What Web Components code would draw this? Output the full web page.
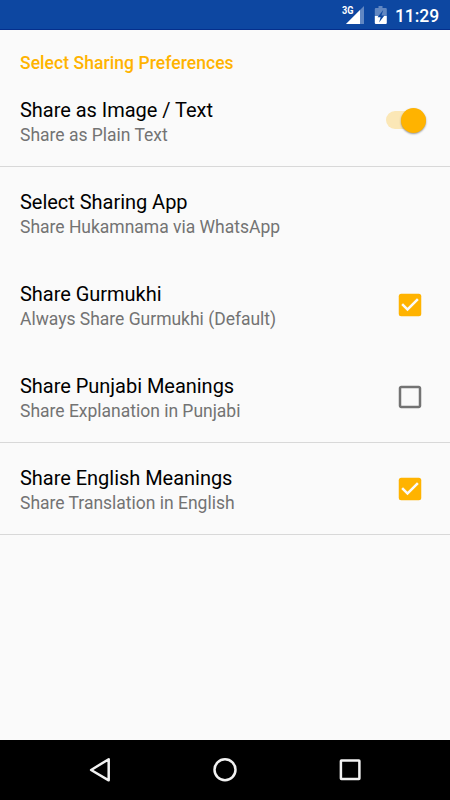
<!DOCTYPE html>
<html lang="en">
<head>
<meta charset="utf-8">
<title>Sharing Preferences</title>
<style>
body{margin:0;background:#fafafa;font-family:Roboto,"Noto Sans",sans-serif}
</style>
</head>
<body>
<settings-screen></settings-screen>
<script>
const define = (name, html) => customElements.define(name, class extends HTMLElement {
  constructor() {
    super();
    const t = document.createElement('template');
    t.innerHTML = html;
    this.attachShadow({mode: 'open'}).append(t.content.cloneNode(true));
  }
});

define('status-bar', `<style>
:host{display:flex;height:30px;box-sizing:border-box;background:#0d47a1;border-bottom:1px solid #052f8c;color:#fff;justify-content:flex-end;padding-right:11px;flex:none}
svg{display:block;width:54px;height:30px;flex:none}
.g{font:700 11px/11px Roboto,sans-serif;fill:#fff}
time{font-size:17.5px;font-weight:500;letter-spacing:-.08px;line-height:32px;width:45px;text-align:right;margin-left:2px;white-space:nowrap}
</style>
<svg viewBox="338 0 54 30">
<path d="M364 6v18h-18z" fill="#fff" opacity=".35"/><path d="M360 10v14h-14z" fill="#fff"/>
<text class="g" x="342" y="14" textLength="11.5" lengthAdjust="spacingAndGlyphs">3G</text>
<path d="M378.500 6h4v2h3.200q1.100 0 1.100 1.100V16h-12V9.100q0-1.100 1.100-1.100h2.600z" fill="#fff" opacity=".35"/>
<path d="M374.800 16h12v6.900q0 1.100-1.100 1.100h-9.800q-1.100 0-1.100-1.100z" fill="#fff"/>
<path d="M383.300 10l-5.800 7.200h3.100l-1.500 5.300 5.300-7h-3z" fill="#0d47a1"/>
</svg><time><slot></slot></time>`);

define('section-header', `<style>
:host{display:block;height:45px;box-sizing:border-box;padding:23px 20px 0;color:#ffb300;font-size:17.5px;font-weight:500;line-height:21px;letter-spacing:.06px}
</style><slot></slot>`);

define('preference-row', `<style>
:host{display:flex;align-items:center;height:92px;box-sizing:border-box;padding:0 20px;border-bottom:1px solid transparent}
:host([divided]){border-bottom-color:#d8d8d8}
.text{flex:1;display:flex;flex-direction:column;padding-top:4px}
.title{font-size:20px;line-height:25px;color:#000;letter-spacing:-.03px}
.summary{font-size:17.5px;line-height:25px;color:#737373;letter-spacing:-.01px}
</style>
<div class="text"><span class="title"><slot name="title"></slot></span><span class="summary"><slot></slot></span></div>
<slot name="control"></slot>`);

define('check-box', `<style>
:host{display:block;width:30px;height:30px;margin-right:5px}
svg{display:block}.on{display:none}
:host([checked]) .on{display:inline}:host([checked]) .off{display:none}
</style>
<svg width="30" height="30" viewBox="0 0 24 24">
<path class="off" fill="#737373" d="M19 5v14H5V5h14m0-2H5c-1.100 0-2 .9-2 2v14c0 1.100.9 2 2 2h14c1.100 0 2-.9 2-2V5c0-1.100-.9-2-2-2z"/>
<g class="on"><rect x="3" y="3" width="18" height="18" rx="2" fill="#ffb300"/>
<path fill="#fafafa" d="M10 17l-5-5 1.410-1.410L10 14.170l7.590-7.590L19 8z"/></g>
</svg>`);

define('toggle-switch', `<style>
:host{display:flex;align-items:center;justify-content:flex-end;width:40px;height:18px;border-radius:9px;background:#fbe7b6;margin:-1px 4px 0 0}
i{display:block;width:25px;height:25px;border-radius:50%;background:#ffb300;box-shadow:0 1px 2px rgba(0,0,0,.4);flex:none}
</style><i></i>`);

define('navigation-bar', `<style>
:host{display:flex;height:60px;background:#000;justify-content:center;flex:none}
svg{display:block;width:125px;height:60px;fill:none;stroke:#f2f2f2;stroke-width:2.5;stroke-linejoin:round}
</style>
<svg viewBox="0 0 125 60"><path d="M53.100 30L70.700 19.200v21.100z"/></svg>
<svg viewBox="0 0 125 60"><circle cx="62" cy="29.800" r="10.500"/></svg>
<svg viewBox="0 0 125 60"><rect x="52.900" y="20.500" width="18.500" height="18.500" rx=".5"/></svg>`);

define('settings-screen', `<style>
:host{display:flex;flex-direction:column;width:450px;height:800px;background:#fafafa}
main{flex:1}
</style>
<status-bar>11:29</status-bar>
<main>
<section-header>Select Sharing Preferences</section-header>
<preference-row divided><span slot="title">Share as Image / Text</span>Share as Plain Text<toggle-switch slot="control"></toggle-switch></preference-row>
<preference-row><span slot="title">Select Sharing App</span>Share Hukamnama via WhatsApp</preference-row>
<preference-row><span slot="title">Share Gurmukhi</span>Always Share Gurmukhi (Default)<check-box slot="control" checked></check-box></preference-row>
<preference-row divided><span slot="title">Share Punjabi Meanings</span>Share Explanation in Punjabi<check-box slot="control"></check-box></preference-row>
<preference-row divided><span slot="title">Share English Meanings</span>Share Translation in English<check-box slot="control" checked></check-box></preference-row>
</main>
<navigation-bar></navigation-bar>`);
</script>
</body>
</html>
